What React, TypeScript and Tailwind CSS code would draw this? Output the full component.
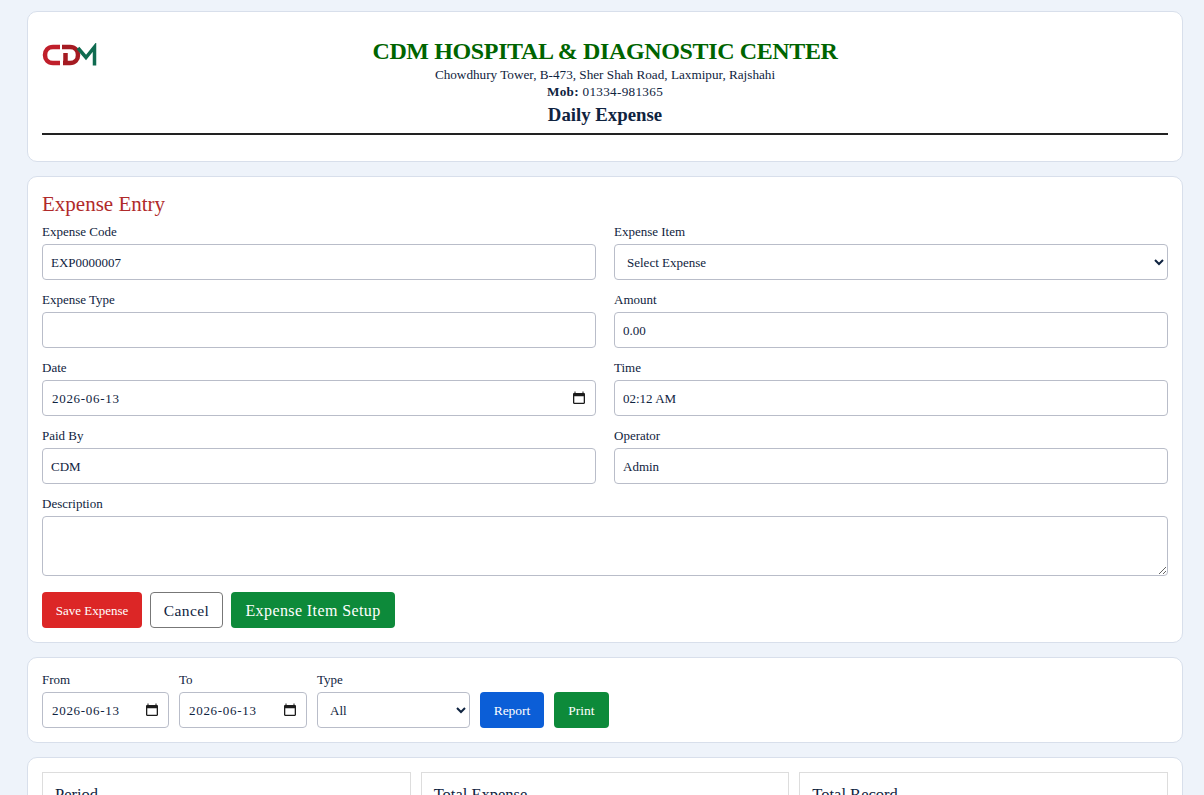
import React from "react";

const selectCls =
  "block w-full h-[36px] rounded-[4px] border border-[#b9bdc9] bg-white px-[8px] text-[13px] text-[#0f2340] outline-none";
const inputCls = selectCls + " pt-[2px]";

function Field({ label, children }: { label: string; children: React.ReactNode }) {
  return (
    <div className="min-w-0">
      <label className="block h-[20px] text-[13px] leading-[16px] text-[#0f2340]">{label}</label>
      {children}
    </div>
  );
}

function DateInput({ value }: { value: string }) {
  return (
    <div className="relative">
      <input className={inputCls + " pl-[9px] tracking-[0.7px]"} defaultValue={value} />
      <svg className="absolute right-[11px] top-[11px]" width="12" height="13" viewBox="0 0 12 13" aria-hidden="true">
        <path d="M2.500 0.500V2H9.500V0.500H10.500V2H10.800C11.500 2 12 2.500 12 3.200V11.800C12 12.500 11.500 13 10.800 13H1.200C0.500 13 0 12.500 0 11.800V3.200C0 2.500 0.500 2 1.200 2H1.500V0.500ZM1.300 5.200V11.700H10.700V5.200Z" fill="#1c1c1c" fillRule="evenodd" />
      </svg>
    </div>
  );
}

function Logo() {
  return (
    <svg width="56" height="24" viewBox="0 0 56 24" aria-label="CDM logo">
      <path d="M18 4H11C6 4 3 7.500 3 12C3 16.500 6 20 11 20H18" fill="none" stroke="#c01f2b" strokeWidth="4.500" />
      <path d="M20 4H28C33 4 36 7.500 36 12C36 16.500 33 20 28 20H21M23.500 10V20" fill="none" stroke="#a51b22" strokeWidth="4.500" />
      <path d="M36 5L44 14.500L52.500 4V22.500" fill="none" stroke="#0f6b50" strokeWidth="3.500" />
    </svg>
  );
}

export default function App() {
  return (
    <div className="h-[795px] overflow-hidden bg-[#eef3fa] pl-[27px] pr-[21px] pt-[11px] text-[#0f2340] font-['Liberation_Serif',serif]">
      <section className="rounded-[10px] border border-[#d8dfeb] bg-white px-[14px] h-[151px]">
        <div className="relative h-[123px] border-b-2 border-[#222222] text-center">
          <div className="absolute left-0 top-[31px]"><Logo /></div>
          <h1 className="pt-[23px] text-[24px] leading-[32px] font-bold tracking-[-0.37px] text-[#006400]">CDM HOSPITAL &amp; DIAGNOSTIC CENTER</h1>
          <p className="text-[13.2px] leading-[16px]">Chowdhury Tower, B-473, Sher Shah Road, Laxmipur, Rajshahi</p>
          <p className="mt-[1px] text-[13.2px] leading-[16px] tracking-[0.3px]"><b>Mob:</b> 01334-981365</p>
          <h2 className="mt-[3px] text-[18.8px] leading-[24px] font-bold">Daily Expense</h2>
        </div>
      </section>

      <section className="mt-[14px] rounded-[10px] border border-[#d8dfeb] bg-white px-[14px] pt-[14px] h-[467px]">
        <h3 className="text-[21px] leading-[26px] text-[#b02a2a]">Expense Entry</h3>
        <div className="mt-[7px] grid grid-cols-2 gap-x-[18px] gap-y-[12px]">
          <Field label="Expense Code"><input className={inputCls} defaultValue="EXP0000007" /></Field>
          <Field label="Expense Item">
            <select className={selectCls}><option>Select Expense</option></select>
          </Field>
          <Field label="Expense Type"><input className={inputCls} /></Field>
          <Field label="Amount"><input className={inputCls} defaultValue="0.00" /></Field>
          <Field label="Date"><DateInput value="2026-06-13" /></Field>
          <Field label="Time"><input className={inputCls} defaultValue="02:12 AM" /></Field>
          <Field label="Paid By"><input className={inputCls} defaultValue="CDM" /></Field>
          <Field label="Operator"><input className={inputCls} defaultValue="Admin" /></Field>
          <div className="col-span-2">
            <Field label="Description">
              <textarea className="block h-[60px] w-full rounded-[4px] border border-[#b9bdc9] bg-white px-[8px] py-[6px] text-[13px] outline-none" />
            </Field>
          </div>
        </div>
        <div className="mt-[16px] flex gap-[8px]">
          <button className="h-[36px] w-[100px] rounded-[4px] bg-[#dc2626] pt-[2px] text-[13px] text-white">Save Expense</button>
          <button className="h-[36px] w-[73px] rounded-[4px] border border-[#777777] bg-white pt-[2px] text-[15.5px] tracking-[0.4px]">Cancel</button>
          <button className="h-[36px] w-[164px] rounded-[4px] bg-[#0d8a3a] pt-[2px] text-[16px] tracking-[0.4px] text-white">Expense Item Setup</button>
        </div>
      </section>

      <section className="mt-[14px] flex items-end gap-[10px] rounded-[10px] border border-[#d8dfeb] bg-white px-[14px] h-[86px] pb-[14px]">
        <div className="w-[127px]"><Field label="From"><DateInput value="2026-06-13" /></Field></div>
        <div className="w-[128px]"><Field label="To"><DateInput value="2026-06-13" /></Field></div>
        <div className="w-[153px]"><Field label="Type"><select className={selectCls}><option>All</option></select></Field></div>
        <button className="h-[36px] w-[64px] rounded-[4px] bg-[#0b5ed7] pt-[2px] text-[13.5px] text-white">Report</button>
        <button className="h-[36px] w-[55px] rounded-[4px] bg-[#0d8a3a] pt-[2px] text-[13.5px] text-white">Print</button>
      </section>

      <section className="mt-[14px] grid grid-cols-3 gap-[10px] rounded-[10px] border border-[#d8dfeb] bg-white p-[14px]">
        {["Period", "Total Expense", "Total Record"].map((t) => (
          <div key={t} className="h-[80px] border border-[#dddddd] px-[12px] pt-[10px] text-[16.5px]">{t}</div>
        ))}
      </section>
    </div>
  );
}
